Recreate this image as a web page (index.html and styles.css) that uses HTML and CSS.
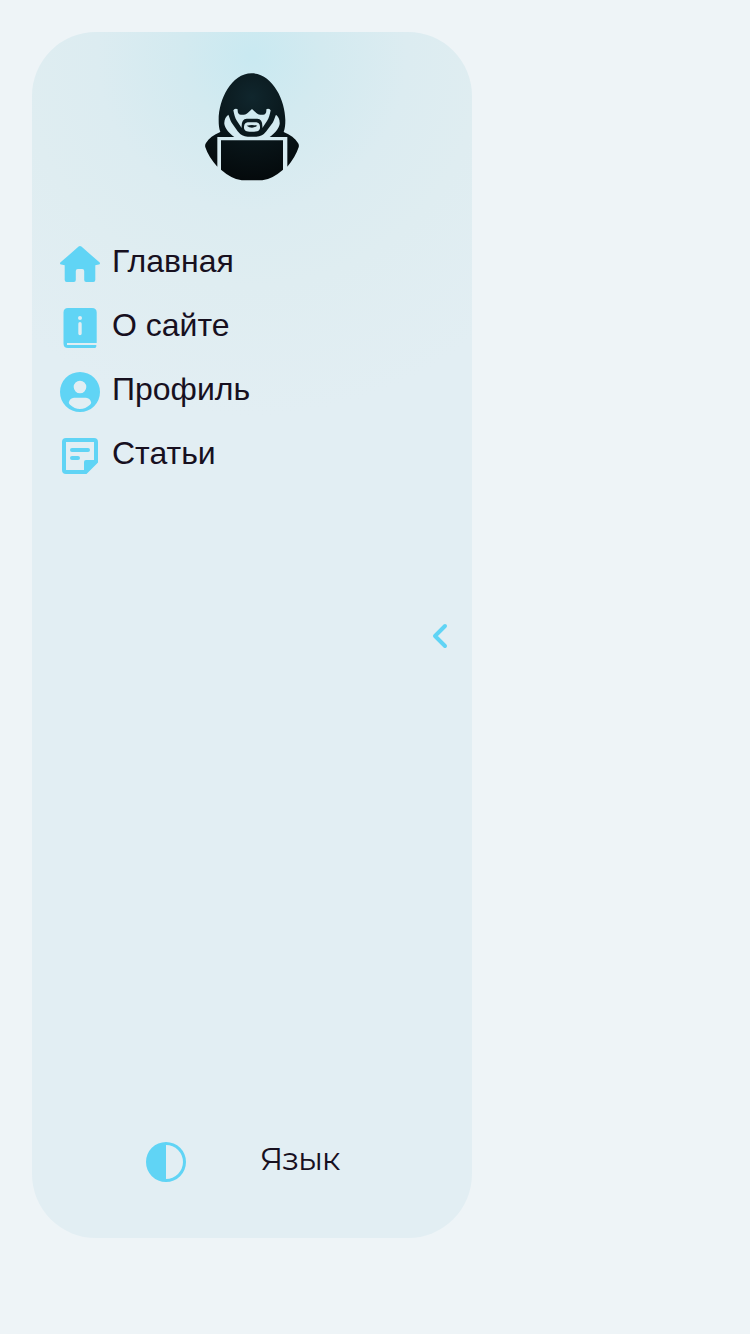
FILE: index.html
```html
<!DOCTYPE html>
<html lang="ru">
<head>
<meta charset="utf-8">
<title>Меню</title>
<link rel="stylesheet" href="styles.css">
</head>
<body>
<aside class="sidebar">
  <svg class="logo" viewBox="0 0 360 390">
    <defs>
      <radialGradient id="hood" gradientUnits="userSpaceOnUse" cx="180" cy="105" r="255">
        <stop offset="0" stop-color="#10262d"/>
        <stop offset=".5" stop-color="#09161a"/>
        <stop offset="1" stop-color="#04090b"/>
      </radialGradient>
    </defs>
    <g fill="url(#hood)" fill-rule="evenodd">
      <path d="M179 34C240 34 280 113 280 174C280 190 279 199 275 210C295 218 310 229 318 243Q322 249 320 256Q310 286 286 314V225H233C247 215 260 202 263 186C264 173 259 163 252 158C248 166 247 174 242 182L223 208Q211 224 193 224H167Q149 224 137 208L119 182C114 174 113 166 109 158C102 163 96 173 97 186C100 202 113 215 127 225H76V314Q50 286 40 256Q38 249 42 243C50 229 65 218 85 210C81 199 80 190 80 174C80 113 118 34 179 34ZM124 145C127 160 129 168 135 177L149 198Q147 171 164 170H196Q213 171 211 198L225 177C231 168 233 160 236 145Q230 138 223 142Q224 158 213 158H204Q198 158 193 153L180 141L167 153Q162 158 156 158H147Q136 158 137 142Q130 138 124 145ZM167 181Q157 182 156 194Q155 205 164 208Q180 211 196 208Q205 205 204 194Q203 182 193 181Z"/>
      <path d="M164 191Q180 187 196 191Q188 197 180 197Q172 197 164 191Z"/>
      <path d="M87 235H273V323Q241 351 211 355H149Q119 351 87 323Z"/>
    </g>
  </svg>
  <nav class="menu">
    <a class="item"><svg class="icon" viewBox="0 0 40 40"><path d="M18.600 2.600Q20 1.400 21.400 2.600L39.700 18.600Q40.600 20 38.700 20.500L35.300 21.200V36Q35.300 38 33.300 38H26.200Q24.200 38 24.200 36V27Q24.200 25 22.200 25H17.800Q15.800 25 15.800 27V36Q15.800 38 13.800 38H6.700Q4.700 38 4.700 36V21.200L1.300 20.500Q-.6 20 .3 18.600Z"/></svg><span>Главная</span></a>
    <a class="item"><svg class="icon" viewBox="0 0 40 40"><path fill-rule="evenodd" d="M8 0H32Q36.700 0 36.700 4.500V35H7V37H36.300V38.500Q36 40 34.500 40H8Q3.500 40 3.500 35.500V4.500Q3.500 0 8 0ZM20 8A2 2 0 1 0 20 12A2 2 0 1 0 20 8ZM18.300 15.700V25.500Q18.300 27.200 20 27.200T21.700 25.500V15.700Q21.700 14 20 14T18.300 15.700Z"/></svg><span>О сайте</span></a>
    <a class="item"><svg class="icon" viewBox="0 0 40 40"><path fill-rule="evenodd" d="M20 0A20 20 0 1 1 20 40A20 20 0 0 1 20 0ZM20 8.700A6.300 6.300 0 1 0 20 21.300A6.300 6.300 0 1 0 20 8.700ZM14 25.700Q10 26 8.800 30.500Q9 32 10 32.800Q14.500 37 20 37T30 32.800Q31 32 31.200 30.500Q30 26 26 25.700Z"/></svg><span>Профиль</span></a>
    <a class="item"><svg class="icon" viewBox="0 0 40 40"><path fill-rule="evenodd" d="M6 2H34Q38 2 38 6V26.500L26.500 38H6Q2 38 2 34V6Q2 2 6 2ZM6 6V34H24V26Q24 24 26 24H34V6Z"/><path d="M12 12H28a2 2 0 0 1 0 4H12a2 2 0 0 1 0-4ZM12 20H18a2 2 0 0 1 0 4H12a2 2 0 0 1 0-4Z"/></svg><span>Статьи</span></a>
  </nav>
  <svg class="collapse" viewBox="0 0 40 40"><path d="M25 10L15 20L25 30"/></svg>
  <footer class="controls">
    <svg class="theme" viewBox="0 0 40 40"><path fill-rule="evenodd" d="M20 0A20 20 0 1 1 20 40A20 20 0 0 1 20 0ZM20 3V37A17 17 0 0 0 20 3Z"/></svg>
    <span class="language">Язык</span>
  </footer>
</aside>
</body>
</html>
```
FILE: styles.css
```css
* { box-sizing: border-box; }
body {
  margin: 0;
  padding: 32px;
  min-height: 1334px;
  background: #eef4f7;
  color: #17101f;
  font: 32px/40px "Liberation Sans", Arial, sans-serif;
}
.sidebar {
  width: 440px;
  height: 1206px;
  padding: 30px 24px 56px 28px;
  border-radius: 64px;
  display: flex;
  flex-direction: column;
  background: radial-gradient(circle at 220px 24px, #c9e9f1 0, #d3eaf0 70px, #dcecf1 155px, #dfedf1 230px, #e2eef3 360px);
}
.logo {
  width: 120px;
  height: 130px;
  margin-left: 132px;
}
.menu {
  margin-top: 52px;
  display: flex;
  flex-direction: column;
  gap: 24px;
}
.item {
  height: 40px;
  display: flex;
  gap: 12px;
}
.item span { margin-top: -3px; }
.icon, .theme {
  width: 40px;
  height: 40px;
  fill: #60d4f5;
}
.collapse {
  width: 40px;
  height: 40px;
  margin-top: 140px;
  margin-left: 360px;
  fill: none;
  stroke: #60d4f5;
  stroke-width: 4;
  stroke-linecap: round;
  stroke-linejoin: round;
}
.controls {
  margin-top: auto;
  padding-left: 86px;
  display: flex;
  gap: 74px;
}
.language {
  margin-top: -3px;
  font-family: Montserrat, Roboto, sans-serif;
  font-size: 32px;
  letter-spacing: -1.3px;
}
```
